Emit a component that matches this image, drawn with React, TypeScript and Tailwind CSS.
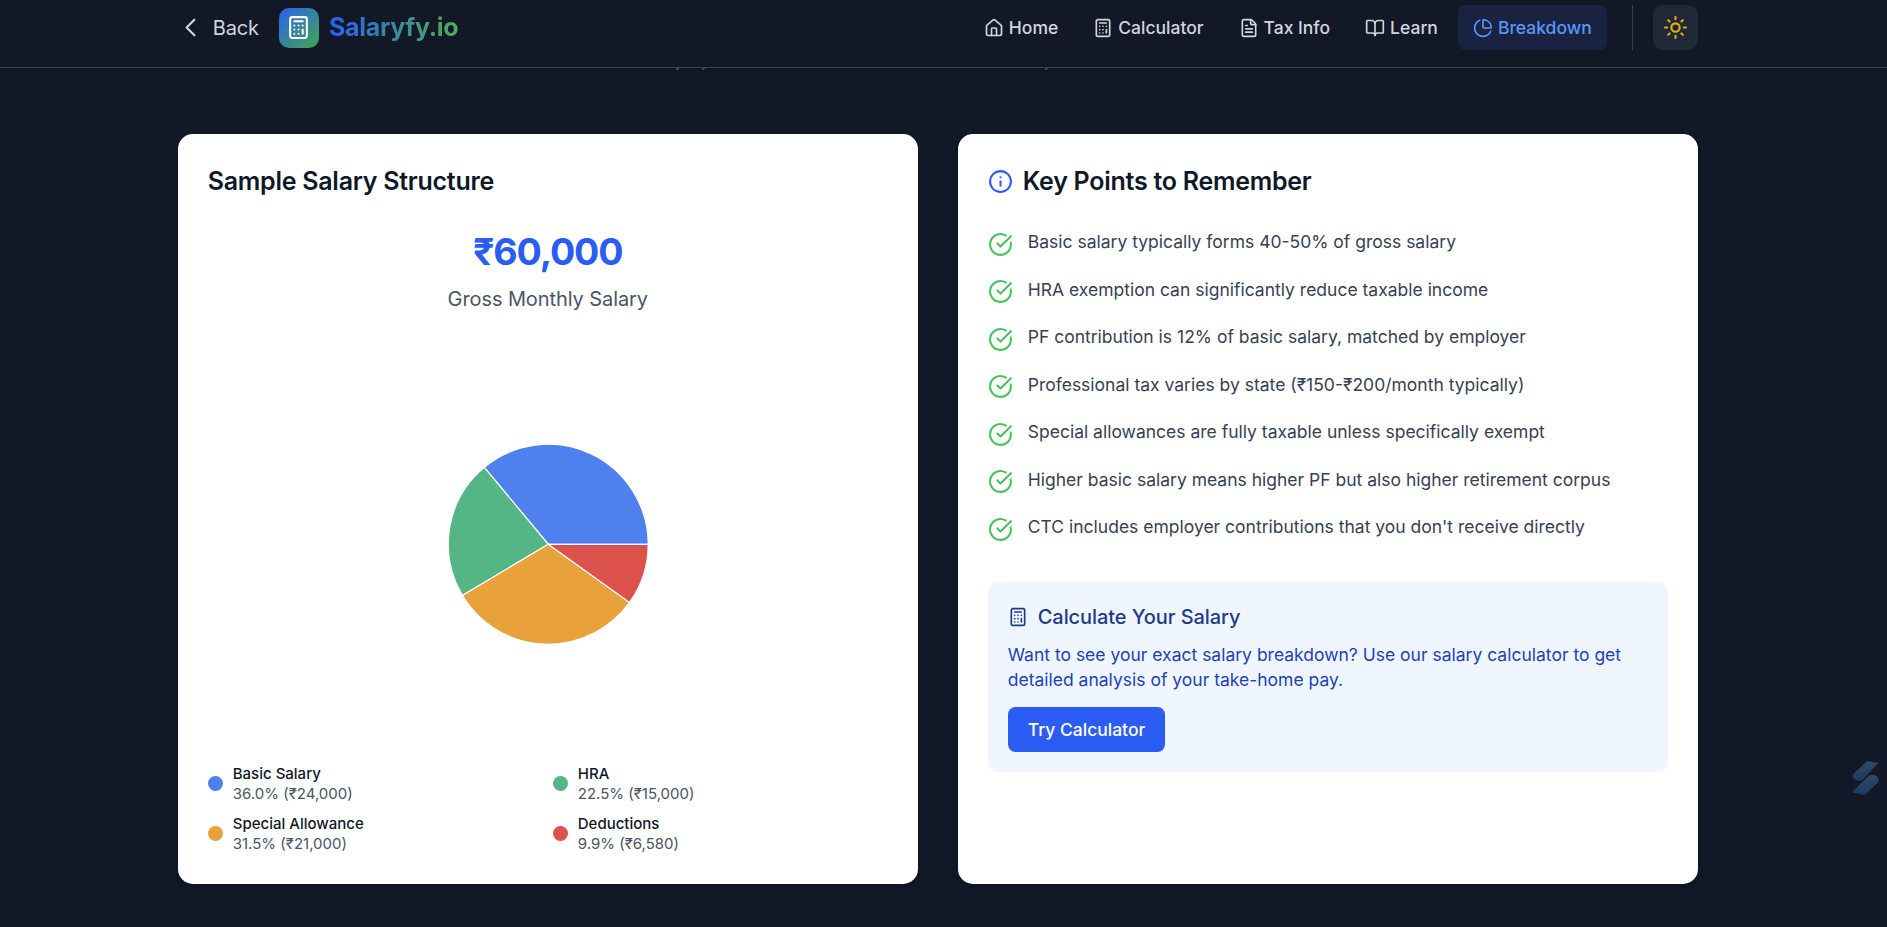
import { BookOpen, Calculator, ChartPie, CircleCheckBig, FileText, House, Info, Sun } from 'lucide-react';

const navItems = [
  { label: 'Home', icon: House, active: false },
  { label: 'Calculator', icon: Calculator, active: false },
  { label: 'Tax Info', icon: FileText, active: false },
  { label: 'Learn', icon: BookOpen, active: false },
  { label: 'Breakdown', icon: ChartPie, active: true },
];

const slices = [
  { name: 'Basic Salary', value: 24000, pct: '36.0%', amount: '₹24,000', fill: '#4f81ee', dot: 'bg-[#4f81ee]' },
  { name: 'HRA', value: 15000, pct: '22.5%', amount: '₹15,000', fill: '#55b685', dot: 'bg-[#55b685]' },
  { name: 'Special Allowance', value: 21000, pct: '31.5%', amount: '₹21,000', fill: '#e8a13b', dot: 'bg-[#e8a13b]' },
  { name: 'Deductions', value: 6580, pct: '9.9%', amount: '₹6,580', fill: '#dd524c', dot: 'bg-[#dd524c]' },
];

const keyPoints = [
  'Basic salary typically forms 40-50% of gross salary',
  'HRA exemption can significantly reduce taxable income',
  'PF contribution is 12% of basic salary, matched by employer',
  'Professional tax varies by state (₹150-₹200/month typically)',
  'Special allowances are fully taxable unless specifically exempt',
  'Higher basic salary means higher PF but also higher retirement corpus',
  "CTC includes employer contributions that you don't receive directly",
];

function Pie() {
  const r = 80;
  const total = slices.reduce((sum, s) => sum + s.value, 0);
  let angle = 0;
  return (
    <svg className="size-[162px]" viewBox="-81 -81 162 162">
      {slices.map((s) => {
        const end = angle + (s.value / total) * Math.PI * 2;
        const d = `M0 0L${r * Math.cos(angle)} ${-r * Math.sin(angle)}A${r} ${r} 0 0 0 ${r * Math.cos(end)} ${-r * Math.sin(end)}Z`;
        angle = end;
        return <path key={s.name} d={d} fill={s.fill} stroke="#fff" strokeWidth="1" />;
      })}
    </svg>
  );
}

function Header() {
  return (
    <header className="h-[54.4px] border-b border-[#364153] bg-[#131827] pr-[9.2px] shadow-sm">
      <div className="mx-auto flex max-w-7xl items-center justify-between px-8 pt-1">
        <div className="flex items-center gap-4">
          <button className="flex items-center gap-2 text-base tracking-[-0.1px] text-gray-300">
            <svg className="size-5" viewBox="0 0 24 24" fill="none" stroke="currentColor" strokeWidth="2" strokeLinecap="round" strokeLinejoin="round">
              <path d="M15.75 19.5 8.25 12l7.5-7.5" />
            </svg>
            Back
          </button>
          <div className="flex items-center gap-2">
            <div className="flex size-8 items-center justify-center rounded-lg bg-linear-to-br/srgb from-[#2b62ef] to-[#3fa64f] text-white">
              <Calculator className="size-5" />
            </div>
            <span className="bg-linear-to-r/srgb from-[#2860f5] to-[#4caf50] bg-clip-text text-xl font-bold tracking-[-0.25px] text-transparent">Salaryfy.io</span>
          </div>
        </div>
        <nav className="flex items-center gap-1">
          {navItems.map(({ label, icon: Icon, active }) => (
            <a
              key={label}
              className={`flex h-9 items-center gap-1 rounded-md px-3 text-sm font-medium ${active ? 'bg-[#192241] text-[#5b96f7]' : 'text-gray-300'}`}
            >
              <Icon className="size-4" />
              {label}
            </a>
          ))}
          <div className="ml-4 border-l border-[#364153] pl-4">
            <button className="flex size-9 items-center justify-center rounded-lg bg-[#1f2937] text-[#e9b013]">
              <Sun className="size-5" />
            </button>
          </div>
        </nav>
      </div>
    </header>
  );
}

export default function App() {
  return (
    <div className="h-[741.6px] overflow-hidden bg-[#111827] font-[Inter,sans-serif] [zoom:1.25]">
      <Header />
      <main className="pr-[9.2px]">
        {/* descenders of the subtitle that has scrolled under the header */}
        <svg className="ml-[540px] block h-[52.8px] w-[300px]" viewBox="0 0 375 66" fill="#3c475a">
          <path d="M1 0h3v2H1zM27 0h4l-1 1h-1v1h-2zM370 0h4l-1 1h-1v1h-2z" />
        </svg>
        <div className="mx-auto grid max-w-7xl grid-cols-2 gap-8 px-8">
          <section className="h-[600px] rounded-xl bg-white p-6 shadow-md">
            <h3 className="mb-6 text-xl font-semibold tracking-[-0.21px] text-gray-900">Sample Salary Structure</h3>
            <div className="mb-6 text-center">
              <div className="mb-2 text-3xl font-bold tracking-[-0.9px] text-[#2b5cf4]">₹60,000</div>
              <div className="text-base tracking-[-0.07px] text-gray-600">Gross Monthly Salary</div>
            </div>
            <div className="flex h-80 items-center justify-center">
              <Pie />
            </div>
            <div className="mt-4 grid grid-cols-2 gap-2">
              {slices.map((s) => (
                <div key={s.name} className="flex items-center gap-2 text-xs">
                  <span className={`size-3 rounded-full ${s.dot}`} />
                  <div>
                    <div className="font-medium text-gray-900">{s.name}</div>
                    <div className="text-gray-600">{s.pct} ({s.amount})</div>
                  </div>
                </div>
              ))}
            </div>
          </section>
          <section className="h-[600px] rounded-xl bg-white p-6 shadow-md">
            <h3 className="mb-6 flex items-center gap-2 text-xl font-semibold tracking-[-0.21px] text-gray-900">
              <Info className="size-5 text-[#2b5cf4]" />
              Key Points to Remember
            </h3>
            <ul className="flex flex-col gap-4">
              {keyPoints.map((point) => (
                <li key={point} className="flex items-start gap-3 text-sm text-gray-700">
                  <CircleCheckBig className="mt-0.5 size-5 shrink-0 text-[#4ac35f]" />
                  {point}
                </li>
              ))}
            </ul>
            <div className="mt-8 rounded-lg bg-[#eff6fe] p-4">
              <h4 className="mb-2 flex items-center gap-2 text-base font-medium tracking-[-0.06px] text-[#1f3a88]">
                <Calculator className="size-4" />
                Calculate Your Salary
              </h4>
              <p className="mb-3 text-sm text-[#2341b5]">
                Want to see your exact salary breakdown? Use our salary calculator to get detailed analysis of your take-home pay.
              </p>
              <button className="h-9 rounded-md bg-[#2b5cf4] px-4 text-sm font-medium text-white">Try Calculator</button>
            </div>
          </section>
        </div>
      </main>
      <svg className="absolute top-[608px] right-[6px] h-[29px] w-[22px]" viewBox="0 0 27 36" fill="none">
        <defs>
          <linearGradient id="mark" x1="0" y1="0" x2="0" y2="1">
            <stop offset="0" stopColor="#344861" />
            <stop offset="1" stopColor="#193a66" />
          </linearGradient>
        </defs>
        <path d="M15 1L26 3L11 19Q8 22 3 20Q-1 17 2 13Z" fill="url(#mark)" />
        <path d="M12 35L0 32L15 17Q19 13 24 16Q28 19 25 23Z" fill="url(#mark)" />
      </svg>
    </div>
  );
}
